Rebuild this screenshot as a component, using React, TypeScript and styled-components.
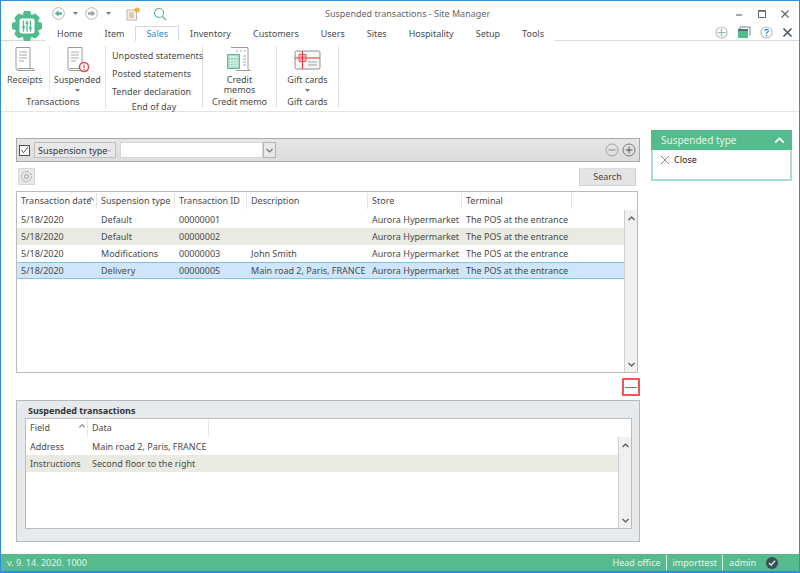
import React from "react";
import styled, { createGlobalStyle } from "styled-components";

const GlobalStyle = createGlobalStyle`
  html, body { margin: 0; padding: 0; background: #fff; }
  body { font-family: "Noto Sans", "Liberation Sans", sans-serif; font-size: 9px; color: #4a4a4a; }
  * { box-sizing: border-box; }
`;

const tabs = ["Home", "Item", "Sales", "Inventory", "Customers", "Users", "Sites", "Hospitality", "Setup", "Tools"];

const mainCols = [80, 78, 72, 121, 94, 110];
const mainRows = [
  ["5/18/2020", "Default", "00000001", "", "Aurora Hypermarket", "The POS at the entrance"],
  ["5/18/2020", "Default", "00000002", "", "Aurora Hypermarket", "The POS at the entrance"],
  ["5/18/2020", "Modifications", "00000003", "John Smith", "Aurora Hypermarket", "The POS at the entrance"],
  ["5/18/2020", "Delivery", "00000005", "Main road 2, Paris, FRANCE", "Aurora Hypermarket", "The POS at the entrance"],
];
const mainHead = ["Transaction date", "Suspension type", "Transaction ID", "Description", "Store", "Terminal"];

const detailCols = [62, 121];
const detailRows = [
  ["Address", "Main road 2, Paris, FRANCE"],
  ["Instructions", "Second floor to the right"],
];

const ReceiptIcon = ({ badge }: { badge?: boolean }) => (
  <svg width="26" height="27" viewBox="0 0 26 27" fill="none">
    <path d="M4 1.5h14v21M4 1.5v20.5c0 1.5 1 2.5 2.5 2.5h16c-1-.5-1.500-1.200-1.500-2h-14c-.8 0-1.500.800-1.500 2" stroke="#9a9a9a" strokeWidth="1" />
    <path d="M7 6h8M7 9h8M7 12h8M7 15h5" stroke="#a8a8a8" strokeWidth="1" />
    {badge && <circle cx="20" cy="21" r="4.500" fill="#fff" stroke="#e8474c" strokeWidth="1.500" />}
    {badge && <path d="M20 18.500v3.500M20 23v1" stroke="#e8474c" strokeWidth="1.200" />}
  </svg>
);

const CreditIcon = () => (
  <svg width="28" height="27" viewBox="0 0 28 27" fill="none">
    <path d="M5 1.500h17v21c0 1 1 2 2.500 2H10" stroke="#9a9a9a" />
    <path d="M10 5h2M14 5h2M18 5h2M17 10h3M17 13h3M17 16h3M17 19h3" stroke="#a8a8a8" />
    <rect x="1.500" y="8.500" width="12" height="14" fill="#a9e0c5" stroke="#62bd92" />
    <path d="M3.500 11h8M3.500 14.500h2M6.500 14.500h2M9.500 14.500h2M3.500 17h2M6.500 17h2M9.500 17h2M3.500 19.800h2M6.500 19.800h2M9.500 19.800h2" stroke="#fff" />
  </svg>
);

const GiftIcon = () => (
  <svg width="27" height="20" viewBox="0 0 27 20" fill="none">
    <rect x="1" y="1" width="25" height="18" rx="1.500" fill="#f7f7f7" stroke="#8e8e8e" />
    <path d="M14 12h9M14 15h9" stroke="#a0a0a0" />
    <path d="M1 8h25M8.500 1v18" stroke="#ee2b33" />
    <path d="M5 4.500h7v7H5zM6 5.500l5 5M11 5.500l-5 5" stroke="#ee4a50" />
  </svg>
);

const Logo = () => (
  <svg width="32" height="32" viewBox="0 0 32 32">
    <path d="M13 1h6l1.500 4 4-1.500 4.200 4.200-1.700 3.800 4 1.500v6l-4 1.500 1.700 3.800-4.200 4.200-4-1.500L19 31h-6l-1.500-4.200-4 1.700-4.200-4.200 1.700-4-4-1.300v-6l4-1.500-1.700-3.800L7.500 3.500l4 1.500z" fill="#52bb8b" />
    <rect x="8.500" y="8.500" width="15" height="15" rx="2" fill="#fff" />
    <path d="M12.500 10.500v11M16 10.500v11M19.500 10.500v11" stroke="#52bb8b" strokeWidth="1.300" />
    <path d="M11 17h3M14.500 13h3M18 18h3" stroke="#52bb8b" strokeWidth="1.500" />
  </svg>
);

const NavIcon = ({ back, muted }: { back?: boolean; muted?: boolean }) => (
  <svg width="13" height="13" viewBox="0 0 13 13" fill="none">
    <circle cx="6.500" cy="6.500" r="5.800" stroke="#b4b4b4" />
    <path
      d={back ? "M2.800 6.500 6.500 3.200v2h3.500v2.600H6.500v2z" : "M10.200 6.500 6.500 3.200v2H3v2.600h3.500v2z"}
      fill={muted ? "#a3a3a3" : "#52bb8b"}
    />
  </svg>
);

const Chevron = ({ up, color = "#666", size = 9 }: { up?: boolean; color?: string; size?: number }) => (
  <svg width={size} height={size} viewBox="0 0 9 9" fill="none">
    <path d={up ? "M1.500 6 4.500 3l3 3" : "M1.500 3l3 3 3-3"} stroke={color} strokeWidth="1.200" />
  </svg>
);

const Caret = () => (
  <svg width="5" height="3" viewBox="0 0 5 3">
    <path d="M0 0h5L2.500 3z" fill="#777" />
  </svg>
);

const ScrollBar = () => (
  <ScrollTrack>
    <ScrollBtn>
      <Chevron up color="#555" />
    </ScrollBtn>
    <ScrollBtn>
      <Chevron color="#555" />
    </ScrollBtn>
  </ScrollTrack>
);

export default function App() {
  return (
    <Page>
      <GlobalStyle />
      <Header>
        <LogoSlot>
          <Logo />
        </LogoSlot>
        <TitleRow>
          <QuickBar>
            <NavIcon back />
            <CaretSlot>
              <Caret />
            </CaretSlot>
            <NavIcon muted />
            <CaretSlot>
              <Caret />
            </CaretSlot>
            <svg width="14" height="14" viewBox="0 0 14 14" fill="none">
              <rect x="1" y="3" width="9.500" height="10" fill="#fbf3dc" stroke="#b8b8b8" />
              <path d="M3 6h5M3 8h5M3 10h5" stroke="#b0a78c" />
              <circle cx="11" cy="3" r="2.500" fill="#f2b035" />
            </svg>
            <svg width="14" height="14" viewBox="0 0 14 14" fill="none">
              <circle cx="6" cy="6" r="4.500" stroke="#52bb8b" strokeWidth="1.100" />
              <path d="M9.500 9.500 13 13" stroke="#52bb8b" strokeWidth="1.300" />
            </svg>
          </QuickBar>
          <WindowTitle>Suspended transactions - Site Manager</WindowTitle>
          <WindowControls>
            <svg width="10" height="10" viewBox="0 0 10 10">
              <path d="M2 6h6" stroke="#777" strokeWidth="1.300" />
            </svg>
            <svg width="10" height="10" viewBox="0 0 10 10" fill="none">
              <path d="M1.500 1.500h7v7h-7z" stroke="#666" />
              <path d="M1.500 2h7" stroke="#666" strokeWidth="1.500" />
            </svg>
            <svg width="10" height="10" viewBox="0 0 10 10">
              <path d="M1.500 1.500l7 7M8.500 1.500l-7 7" stroke="#666" strokeWidth="1.300" />
            </svg>
          </WindowControls>
        </TitleRow>
        <TabRow>
          <Tabs>
            {tabs.map((t) => (
              <Tab key={t} $active={t === "Sales"}>
                {t}
              </Tab>
            ))}
          </Tabs>
          <HelpIcons>
            <svg width="13" height="13" viewBox="0 0 13 13" fill="none">
              <circle cx="6.500" cy="6.500" r="5.500" stroke="#bdbdbd" strokeWidth="1.200" />
              <path d="M6.500 2.500v8M2.500 6.500h8" stroke="#6fcaa0" strokeWidth="1.200" />
            </svg>
            <svg width="14" height="13" viewBox="0 0 14 13" fill="none">
              <path d="M3 3V1h10v8h-1" stroke="#6e7e88" />
              <rect x="1" y="4" width="10" height="8" fill="#52bb8b" />
              <rect x="1" y="3" width="10" height="2" fill="#5b6c78" />
            </svg>
            <svg width="13" height="13" viewBox="0 0 13 13" fill="none">
              <circle cx="6.500" cy="6.500" r="5.500" stroke="#bdbdbd" strokeWidth="1.200" />
              <path d="M4.800 5c0-2.200 3.500-2.200 3.500 0 0 1.500-1.800 1.400-1.800 3M6.500 9v1.200" stroke="#2a8ac8" strokeWidth="1.100" />
            </svg>
            <svg width="11" height="11" viewBox="0 0 11 11">
              <path d="M1.500 1.500l8 8M9.500 1.500l-8 8" stroke="#4c5963" strokeWidth="1.700" />
            </svg>
          </HelpIcons>
        </TabRow>
      </Header>

      <Ribbon>
        <RibbonGroup $width={105}>
          <GroupBody>
            <LargeButton $width={48}>
              <ReceiptIcon />
              <LargeLabel>Receipts</LargeLabel>
            </LargeButton>
            <InnerDivider />
            <LargeButton $width={56}>
              <ReceiptIcon badge />
              <LargeLabel>Suspended</LargeLabel>
              <CaretRow>
                <Caret />
              </CaretRow>
            </LargeButton>
          </GroupBody>
          <GroupLabel>Transactions</GroupLabel>
        </RibbonGroup>
        <RibbonGroup $width={97}>
          <TextActions>
            <span>Unposted statements</span>
            <span>Posted statements</span>
            <span>Tender declaration</span>
          </TextActions>
          <GroupLabel>End of day</GroupLabel>
        </RibbonGroup>
        <RibbonGroup $width={74}>
          <GroupBody>
            <LargeButton $width={73}>
              <CreditIcon />
              <LargeLabel>
                Credit
                <br />
                memos
              </LargeLabel>
            </LargeButton>
          </GroupBody>
          <GroupLabel>Credit memo</GroupLabel>
        </RibbonGroup>
        <RibbonGroup $width={62}>
          <GroupBody>
            <LargeButton $width={61}>
              <GiftSlot>
                <GiftIcon />
              </GiftSlot>
              <LargeLabel>Gift cards</LargeLabel>
              <CaretRow>
                <Caret />
              </CaretRow>
            </LargeButton>
          </GroupBody>
          <GroupLabel>Gift cards</GroupLabel>
        </RibbonGroup>
      </Ribbon>

      <Content>
        <MainColumn>
          <FilterBar>
            <CheckBox>
              <svg width="10" height="10" viewBox="0 0 10 10" fill="none">
                <path d="M1.500 5l2.500 3 5-6.500" stroke="#444" />
              </svg>
            </CheckBox>
            <TypeSelect>
              Suspension type
              <Chevron color="#777" />
            </TypeSelect>
            <ValueInput />
            <ValueDrop>
              <Chevron color="#777" />
            </ValueDrop>
            <FilterSpacer />
            <RoundBtn>
              <svg width="14" height="14" viewBox="0 0 14 14" fill="none">
                <circle cx="7" cy="7" r="6" stroke="#a0a0a0" />
                <path d="M3.500 7h7" stroke="#888" />
              </svg>
            </RoundBtn>
            <RoundBtn>
              <svg width="14" height="14" viewBox="0 0 14 14" fill="none">
                <circle cx="7" cy="7" r="6" stroke="#777" />
                <path d="M3.500 7h7M7 3.500v7" stroke="#555" />
              </svg>
            </RoundBtn>
          </FilterBar>

          <ActionRow>
            <GearBtn>
              <svg width="13" height="13" viewBox="0 0 13 13" fill="none">
                <path
                  d="M5.500 1h2l.4 1.700 1.500.7 1.500-.9 1.300 1.500-.9 1.400.5 1.600 1.500.5v2l-1.500.4-.6 1.500.8 1.400-1.400 1.300-1.500-.9-1.500.6-.4 1.500"
                  stroke="none"
                />
                <circle cx="6.500" cy="6.500" r="2" stroke="#a0a0a0" />
                <circle cx="6.500" cy="6.500" r="5" stroke="#a0a0a0" strokeDasharray="2 1" />
              </svg>
            </GearBtn>
            <SearchBtn>Search</SearchBtn>
          </ActionRow>

          <MainGrid>
            <HeadRow>
              {mainHead.map((h, i) => (
                <HeadCell key={h} style={{ width: mainCols[i] }}>
                  {h}
                  {i === 0 && (
                    <SortMark>
                      <Chevron up color="#777" size={8} />
                    </SortMark>
                  )}
                </HeadCell>
              ))}
            </HeadRow>
            <GridBody>
              <RowList>
                {mainRows.map((r, i) => (
                  <Row key={i} $alt={i === 1} $selected={i === 3}>
                    {r.map((c, j) => (
                      <Cell key={j} style={{ width: mainCols[j] }}>
                        {c}
                      </Cell>
                    ))}
                  </Row>
                ))}
              </RowList>
              <ScrollBar />
            </GridBody>
          </MainGrid>

          <CollapseRow>
            <CollapseBtn>
              <span />
            </CollapseBtn>
          </CollapseRow>

          <DetailPanel>
            <DetailTitle>Suspended transactions</DetailTitle>
            <DetailGrid>
              <HeadRow>
                <HeadCell style={{ width: detailCols[0] }}>
                  Field
                  <SortMark>
                    <Chevron up color="#777" size={8} />
                  </SortMark>
                </HeadCell>
                <HeadCell style={{ width: detailCols[1] }}>Data</HeadCell>
              </HeadRow>
              <GridBody>
                <RowList>
                  {detailRows.map((r, i) => (
                    <Row key={i} $alt={i === 1}>
                      {r.map((c, j) => (
                        <DetailCell key={j} style={{ width: detailCols[j] }}>
                          {c}
                        </DetailCell>
                      ))}
                    </Row>
                  ))}
                </RowList>
                <ScrollBar />
              </GridBody>
            </DetailGrid>
          </DetailPanel>
        </MainColumn>

        <SidePanel>
          <SideHeader>
            Suspended type
            <Chevron up color="#fff" size={13} />
          </SideHeader>
          <SideBody>
            <svg width="10" height="10" viewBox="0 0 10 10">
              <path d="M1 1l8 8M9 1l-8 8" stroke="#8c8c8c" />
            </svg>
            Close
          </SideBody>
        </SidePanel>
      </Content>

      <StatusBar>
        <span>v. 9. 14. 2020. 1000</span>
        <StatusRight>
          <StatusItem>Head office</StatusItem>
          <StatusItem>importtest</StatusItem>
          <StatusLast>admin</StatusLast>
          <svg width="12" height="12" viewBox="0 0 12 12" fill="none">
            <circle cx="6" cy="6" r="6" fill="#3f4b57" />
            <path d="M3 6l2.200 2.200L9 3.800" stroke="#cfe9dc" strokeWidth="1.500" />
          </svg>
        </StatusRight>
      </StatusBar>
    </Page>
  );
}

const Page = styled.div`
  width: 800px;
  height: 573px;
  display: flex;
  flex-direction: column;
  overflow: hidden;
  background: #fff;
  border: 1px solid #2f8fd6;
  border-bottom-width: 2px;
`;

const Header = styled.div`
  position: relative;
  height: 40px;
  flex: none;
  display: flex;
  flex-direction: column;
  padding-left: 45px;
`;

const LogoSlot = styled.div`
  position: absolute;
  left: 10px;
  top: 9px;
  line-height: 0;
`;

const TitleRow = styled.div`
  height: 25px;
  display: flex;
  align-items: center;
  position: relative;
`;

const QuickBar = styled.div`
  display: flex;
  align-items: center;
  gap: 0;
  padding-left: 6px;
  & > svg:nth-of-type(1) { margin-right: 0; }
  & > svg:nth-of-type(3) { margin-left: 8px; margin-right: 13px; }
`;

const CaretSlot = styled.span`
  width: 20px;
  display: flex;
  justify-content: center;
  align-items: center;
`;

const WindowTitle = styled.div`
  position: absolute;
  left: 279px;
  top: 6px;
  color: #666;
  white-space: nowrap;
`;

const WindowControls = styled.div`
  margin-left: auto;
  padding-right: 9px;
  display: flex;
  gap: 13px;
`;

const TabRow = styled.div`
  height: 15px;
  display: flex;
  align-items: flex-end;
  justify-content: space-between;
`;

const Tabs = styled.div`
  display: flex;
  height: 15px;
  align-items: stretch;
`;

const Tab = styled.div<{ $active?: boolean }>`
  padding: 0 10px;
  line-height: 14px;
  border: 1px solid ${(p) => (p.$active ? "#d9d9d9" : "transparent")};
  border-bottom: 0;
  background: #fff;
  color: ${(p) => (p.$active ? "#2a8ac8" : "#4a4a4a")};
  position: relative;
  z-index: 1;
`;

const HelpIcons = styled.div`
  display: flex;
  align-items: center;
  gap: 9px;
  padding-right: 6px;
  height: 18px;
  margin-bottom: 0;
`;

const Ribbon = styled.div`
  height: 72px;
  flex: none;
  display: flex;
  border-top: 1px solid #dcdcdc;
  border-bottom: 1px solid #e4e4e4;
  margin-top: -1px;
`;

const RibbonGroup = styled.div<{ $width: number }>`
  width: ${(p) => p.$width}px;
  margin: 5px 0 3px;
  border-right: 1px solid #e2e2e2;
  display: flex;
  flex-direction: column;
`;

const GroupBody = styled.div`
  flex: 1;
  display: flex;
  align-items: stretch;
`;

const LargeButton = styled.div<{ $width: number }>`
  width: ${(p) => p.$width}px;
  display: flex;
  flex-direction: column;
  align-items: center;
  text-align: center;
  line-height: 10px;
`;

const GiftSlot = styled.div`
  height: 27px;
  display: flex;
  align-items: center;
`;

const LargeLabel = styled.div`
  margin-top: 2px;
`;

const CaretRow = styled.div`
  line-height: 0;
  margin-top: 4px;
`;

const InnerDivider = styled.div`
  width: 1px;
  background: #e6e6e6;
  margin-bottom: 4px;
`;

const TextActions = styled.div`
  flex: 1;
  display: flex;
  flex-direction: column;
  padding: 1px 0 0 6px;
  line-height: 18px;
  white-space: nowrap;
`;

const GroupLabel = styled.div`
  height: 12px;
  line-height: 11px;
  text-align: center;
`;

const Content = styled.div`
  flex: 1;
  min-height: 0;
  display: flex;
  gap: 11px;
  padding: 18px 0 0 15px;
`;

const MainColumn = styled.div`
  width: 624px;
  flex: none;
  display: flex;
  flex-direction: column;
  padding-top: 8px;
`;

const FilterBar = styled.div`
  height: 24px;
  display: flex;
  align-items: center;
  padding: 0 2px;
  border: 1px solid #a9a9a9;
  background: linear-gradient(#e6e6e6, #dcdcdc);
`;

const CheckBox = styled.div`
  width: 11px;
  height: 11px;
  margin-right: 4px;
  background: #fff;
  border: 1px solid #555;
  display: flex;
  align-items: center;
  justify-content: center;
`;

const TypeSelect = styled.div`
  width: 82px;
  height: 16px;
  display: flex;
  align-items: center;
  justify-content: space-between;
  padding: 0 3px;
  border: 1px solid #c0c0c0;
  background: #e8e8e8;
  white-space: nowrap;
  margin-right: 4px;
  color: #333;
`;

const ValueInput = styled.div`
  width: 143px;
  height: 16px;
  background: #fff;
  border: 1px solid #d6d6d6;
`;

const ValueDrop = styled.div`
  width: 13px;
  height: 16px;
  background: #e8e8e8;
  border: 1px solid #b5b5b5;
  display: flex;
  align-items: center;
  justify-content: center;
`;

const FilterSpacer = styled.div`
  flex: 1;
`;

const RoundBtn = styled.div`
  width: 17px;
  height: 14px;
  line-height: 0;
  display: flex;
  justify-content: center;
`;

const ActionRow = styled.div`
  height: 19px;
  margin-top: 5px;
  padding: 0 4px 0 2px;
  display: flex;
  align-items: flex-start;
  justify-content: space-between;
`;

const GearBtn = styled.div`
  width: 17px;
  height: 17px;
  margin-top: 1px;
  background: #e9e9e9;
  border: 1px solid #d8d8d8;
  display: flex;
  align-items: center;
  justify-content: center;
`;

const SearchBtn = styled.div`
  width: 57px;
  height: 18px;
  margin-top: 1px;
  background: #e4e4e4;
  border: 1px solid #cfcfcf;
  border-top-color: #dedede;
  text-align: center;
  line-height: 16px;
  color: #444;
`;

const MainGrid = styled.div`
  width: 622px;
  height: 182px;
  margin-top: 5px;
  border: 1px solid #bcbcbc;
  background: #fff;
  display: flex;
  flex-direction: column;
`;

const HeadRow = styled.div`
  height: 18px;
  flex: none;
  display: flex;
`;

const HeadCell = styled.div`
  position: relative;
  height: 16px;
  margin-top: 1px;
  line-height: 15px;
  padding-left: 4px;
  border-right: 1px solid #e4e4e4;
  white-space: nowrap;
`;

const SortMark = styled.span`
  position: absolute;
  right: 1px;
  top: 2px;
  line-height: 0;
`;

const GridBody = styled.div`
  flex: 1;
  min-height: 0;
  display: flex;
`;

const RowList = styled.div`
  flex: 1;
  min-width: 0;
  padding-top: 1px;
`;

const Row = styled.div<{ $alt?: boolean; $selected?: boolean }>`
  height: 17px;
  display: flex;
  align-items: center;
  background: ${(p) => (p.$selected ? "#cfe5fb" : p.$alt ? "#e9eae2" : "#fff")};
  border-top: 1px solid ${(p) => (p.$selected ? "#7cc4ea" : "transparent")};
  border-bottom: 1px solid ${(p) => (p.$selected ? "#7cc4ea" : "transparent")};
`;

const Cell = styled.div`
  flex: none;
  padding-left: 4px;
  white-space: nowrap;
`;

const DetailCell = styled(Cell)`
  padding-left: 4px;
`;

const ScrollTrack = styled.div`
  width: 13px;
  flex: none;
  background: #f0f0f0;
  border-left: 1px solid #cfcfcf;
  display: flex;
  flex-direction: column;
  justify-content: space-between;
`;

const ScrollBtn = styled.div`
  height: 16px;
  display: flex;
  align-items: center;
  justify-content: center;
`;

const CollapseRow = styled.div`
  height: 18px;
  margin-top: 5px;
  display: flex;
  justify-content: flex-end;
`;

const CollapseBtn = styled.div`
  width: 18px;
  height: 18px;
  border: 2px solid #ee5560;
  display: flex;
  align-items: center;
  justify-content: center;
  & > span {
    width: 12px;
    height: 1px;
    background: #e8474c;
  }
`;

const DetailPanel = styled.div`
  height: 142px;
  margin-top: 4px;
  padding: 4px 7px 12px 8px;
  background: #e6eaed;
  border: 1px solid #b8b8b8;
  display: flex;
  flex-direction: column;
`;

const DetailTitle = styled.div`
  height: 13px;
  line-height: 12px;
  padding-left: 3px;
  font-weight: 700;
  color: #333;
`;

const DetailGrid = styled.div`
  flex: 1;
  min-height: 0;
  background: #fff;
  border: 1px solid #bcbcbc;
  display: flex;
  flex-direction: column;
`;

const SidePanel = styled.div`
  width: 141px;
  height: 51px;
  flex: none;
  display: flex;
  flex-direction: column;
  border: 1px solid #a8dfc6;
  border-width: 0 2px 2px;
`;

const SideHeader = styled.div`
  height: 20px;
  margin: 0 -2px;
  padding: 0 6px 0 10px;
  background: #55bb8c;
  color: #e4f5ec;
  font-size: 10px;
  display: flex;
  align-items: center;
  justify-content: space-between;
`;

const SideBody = styled.div`
  display: flex;
  align-items: center;
  gap: 4px;
  padding: 4px 0 0 7px;
  color: #222;
  line-height: 11px;
`;

const StatusBar = styled.div`
  height: 17px;
  flex: none;
  margin-top: 12px;
  padding: 0 21px 0 6px;
  background: #55bb8c;
  color: #e4f5ec;
  display: flex;
  align-items: center;
  justify-content: space-between;
`;

const StatusRight = styled.div`
  display: flex;
  align-items: center;
`;

const StatusItem = styled.span`
  padding: 0 5px 0 6px;
  line-height: 15px;
  border-right: 1px solid #d8f0e4;
`;

const StatusLast = styled.span`
  padding: 0 10px 0 6px;
`;
